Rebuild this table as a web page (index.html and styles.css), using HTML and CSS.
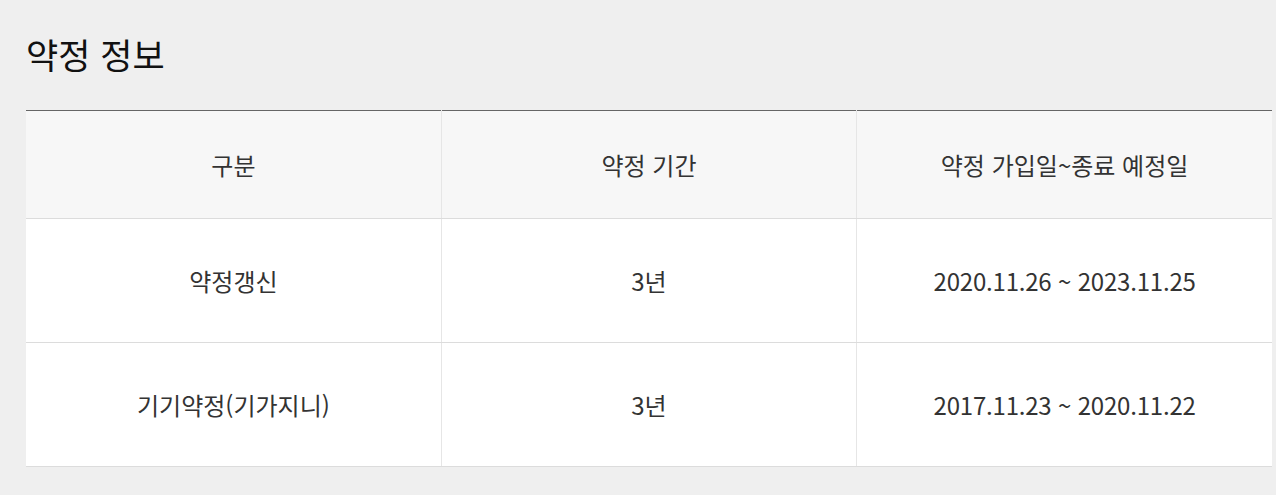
FILE: index.html
```html
<!DOCTYPE html>
<html lang="ko">
<head>
<meta charset="utf-8">
<link rel="stylesheet" href="styles.css">
</head>
<body>
<section class="contract">
  <h2 class="contract-title">약정 정보</h2>
  <table class="contract-table">
    <thead>
      <tr>
        <th>구분</th>
        <th>약정 기간</th>
        <th>약정 가입일~종료 예정일</th>
      </tr>
    </thead>
    <tbody>
      <tr>
        <td>약정갱신</td>
        <td>3년</td>
        <td class="date">2020.11.26 ~ 2023.11.25</td>
      </tr>
      <tr>
        <td>기기약정(기가지니)</td>
        <td>3년</td>
        <td class="date">2017.11.23 ~ 2020.11.22</td>
      </tr>
    </tbody>
  </table>
</section>
</body>
</html>
```
FILE: styles.css
```css
html, body {
  margin: 0;
  padding: 0;
  background: #efefef;
}
body {
  font-family: "Noto Sans CJK KR", "Noto Sans", sans-serif;
  color: #333;
}
.contract {
  padding: 30px 4px 0 26px;
}
.contract-title {
  margin: 0 0 32px 0;
  font-size: 35px;
  font-weight: 400;
  line-height: 48px;
  color: #111;
}
.contract-table {
  width: 100%;
  border-collapse: collapse;
  table-layout: fixed;
  background: #fff;
  border-top: 1px solid #666;
}
.contract-table th,
.contract-table td {
  text-align: center;
  font-size: 24px;
  font-weight: 400;
  color: #333;
  border-left: 1px solid #e6e6e6;
  border-bottom: 1px solid #dcdcdc;
  padding: 0;
}
.contract-table th:first-child,
.contract-table td:first-child {
  border-left: none;
}
.contract-table th {
  background: #f7f7f7;
  height: 107px;
}
.contract-table td {
  height: 123px;
}
.contract-table td.date {
  letter-spacing: -0.2px;
}
```
